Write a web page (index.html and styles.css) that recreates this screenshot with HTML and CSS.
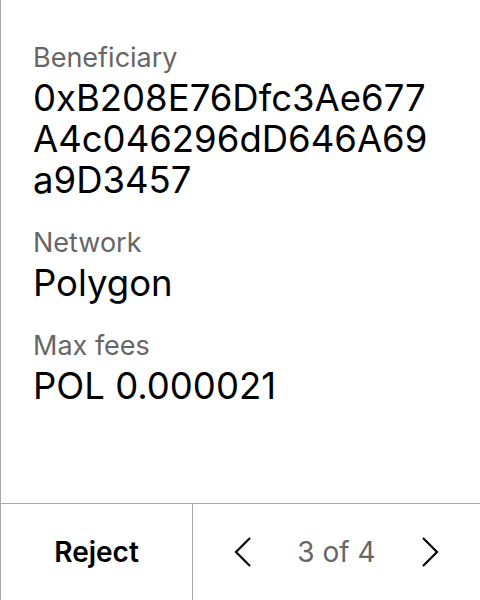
FILE: index.html
```html
<!DOCTYPE html>
<html>
<head>
<meta charset="utf-8">
<link rel="stylesheet" href="styles.css">
</head>
<body>
<div class="screen">
  <div class="content">
    <div class="field">
      <div class="label">Beneficiary</div>
      <div class="value">0xB208E76Dfc3Ae677<br>A4c046296dD646A69<br>a9D3457</div>
    </div>
    <div class="field">
      <div class="label">Network</div>
      <div class="value">Polygon</div>
    </div>
    <div class="field">
      <div class="label">Max fees</div>
      <div class="value">POL 0.000021</div>
    </div>
  </div>
  <div class="footer">
    <div class="reject">Reject</div>
    <div class="pager">
      <svg class="chev" width="18" height="32" viewBox="0 0 18 32"><path d="M16 2 L2 16 L16 30" fill="none" stroke="#000" stroke-width="2.2"/></svg>
      <span class="count">3 of 4</span>
      <svg class="chev" width="18" height="32" viewBox="0 0 18 32"><path d="M2 2 L16 16 L2 30" fill="none" stroke="#000" stroke-width="2.2"/></svg>
    </div>
  </div>
</div>
</body>
</html>
```
FILE: styles.css
```css
html, body {
  margin: 0;
  padding: 0;
  background: #fff;
}
body {
  font-family: Inter, "Noto Sans", sans-serif;
  color: #000;
}
.screen {
  width: 480px;
  height: 600px;
  box-sizing: border-box;
  border-left: 1px solid #aaa;
  display: flex;
  flex-direction: column;
}
.content {
  flex: 1;
  padding: 42px 0 0 32px;
  display: flex;
  flex-direction: column;
  gap: 26px;
}
.field {
  display: flex;
  flex-direction: column;
  gap: 4px;
}
.label {
  font-size: 27px;
  line-height: 32px;
  color: #666;
}
.value {
  font-size: 36.5px;
  line-height: 41px;
}
.footer {
  height: 96px;
  border-top: 1px solid #aaa;
  display: flex;
}
.reject {
  width: 191px;
  border-right: 1px solid #aaa;
  display: flex;
  align-items: center;
  justify-content: center;
  font-size: 28px;
  font-weight: 600;
}
.pager {
  flex: 1;
  display: flex;
  align-items: center;
  justify-content: center;
  gap: 45px;
}
.count {
  font-size: 28px;
  color: #666;
}
.chev {
  display: block;
}
```
